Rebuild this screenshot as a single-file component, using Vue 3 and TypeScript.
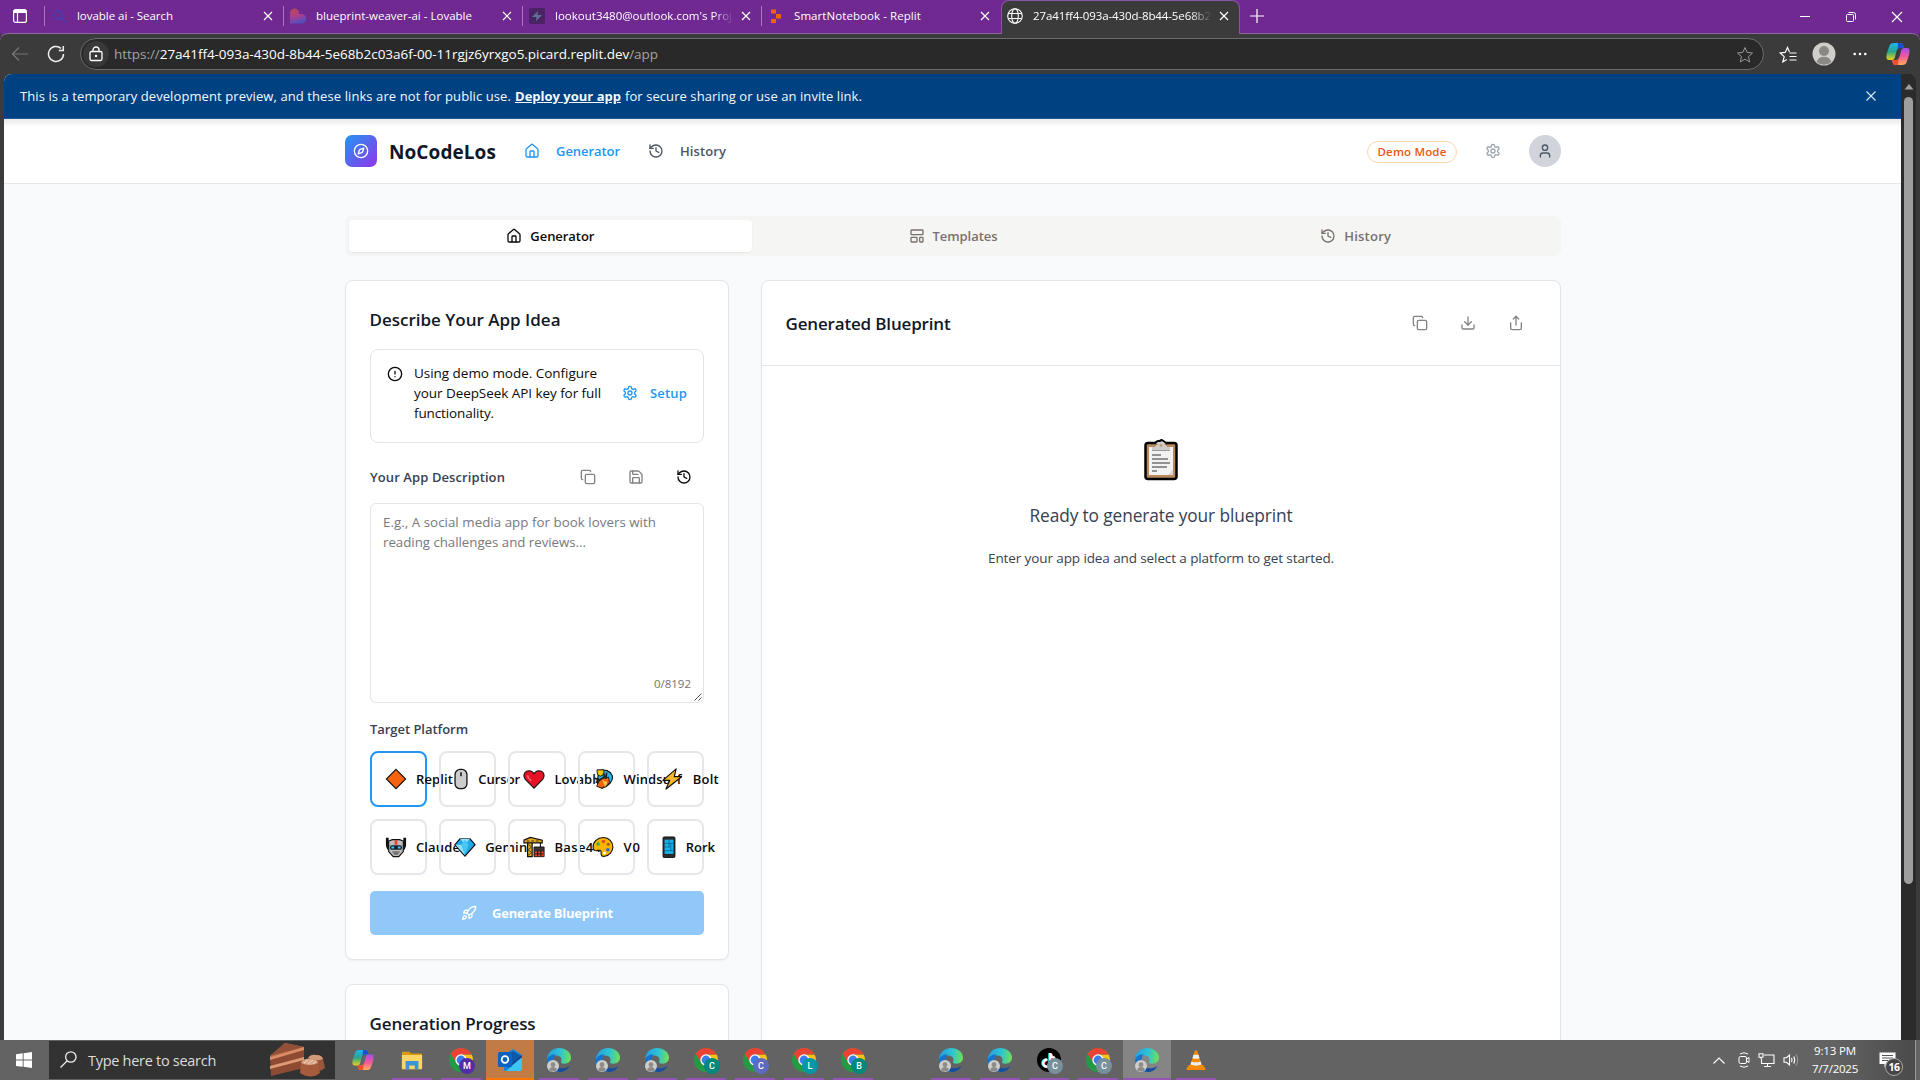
<script setup lang="ts">
import type { Directive } from 'vue'

// Spaces the letters so that a label takes exactly the given width.
const vFit: Directive<HTMLElement, number> = {
  mounted(el, { value }) {
    const count = (el.textContent ?? '').length
    const natural = el.getBoundingClientRect().width
    if (count && natural) el.style.letterSpacing = `${(value - natural) / count}px`
  },
}

const line: Record<string, string> = {
  home: '<path d="M15 21v-8a1 1 0 0 0-1-1h-4a1 1 0 0 0-1 1v8"/><path d="M3 10a2 2 0 0 1 .7-1.5l7-6a2 2 0 0 1 2.6 0l7 6A2 2 0 0 1 21 10v9a2 2 0 0 1-2 2H5a2 2 0 0 1-2-2z"/>',
  history: '<path d="M3 12a9 9 0 1 0 9-9 9.75 9.75 0 0 0-6.74 2.74L3 8"/><path d="M3 3v5h5"/><path d="M12 7v5l4 2"/>',
  layout: '<rect width="18" height="7" x="3" y="3" rx="1"/><rect width="9" height="7" x="3" y="14" rx="1"/><rect width="5" height="7" x="16" y="14" rx="1"/>',
  gear: '<path d="M12.22 2h-.44a2 2 0 0 0-2 2v.18a2 2 0 0 1-1 1.73l-.43.25a2 2 0 0 1-2 0l-.15-.08a2 2 0 0 0-2.73.73l-.22.38a2 2 0 0 0 .73 2.73l.15.1a2 2 0 0 1 1 1.72v.51a2 2 0 0 1-1 1.74l-.15.09a2 2 0 0 0-.73 2.73l.22.38a2 2 0 0 0 2.73.73l.15-.08a2 2 0 0 1 2 0l.43.25a2 2 0 0 1 1 1.73V20a2 2 0 0 0 2 2h.44a2 2 0 0 0 2-2v-.18a2 2 0 0 1 1-1.73l.43-.25a2 2 0 0 1 2 0l.15.08a2 2 0 0 0 2.73-.73l.22-.39a2 2 0 0 0-.73-2.73l-.15-.08a2 2 0 0 1-1-1.74v-.5a2 2 0 0 1 1-1.74l.15-.09a2 2 0 0 0 .73-2.73l-.22-.38a2 2 0 0 0-2.73-.73l-.15.08a2 2 0 0 1-2 0l-.43-.25a2 2 0 0 1-1-1.73V4a2 2 0 0 0-2-2z"/><circle cx="12" cy="12" r="3"/>',
  user: '<path d="M19 21v-2a4 4 0 0 0-4-4H9a4 4 0 0 0-4 4v2"/><circle cx="12" cy="7" r="4"/>',
  compass: '<circle cx="12" cy="12" r="10"/><path d="m16.24 7.76-1.8 5.41a2 2 0 0 1-1.27 1.27L7.76 16.24l1.8-5.41a2 2 0 0 1 1.27-1.27z"/>',
  copy: '<rect width="14" height="14" x="8" y="8" rx="2"/><path d="M4 16c-1.1 0-2-.9-2-2V4c0-1.1.9-2 2-2h10c1.1 0 2 .9 2 2"/>',
  save: '<path d="M15.2 3a2 2 0 0 1 1.4.6l3.8 3.8a2 2 0 0 1 .6 1.4V19a2 2 0 0 1-2 2H5a2 2 0 0 1-2-2V5a2 2 0 0 1 2-2z"/><path d="M17 21v-7a1 1 0 0 0-1-1H8a1 1 0 0 0-1 1v7"/><path d="M7 3v4a1 1 0 0 0 1 1h7"/>',
  download: '<path d="M21 15v4a2 2 0 0 1-2 2H5a2 2 0 0 1-2-2v-4"/><path d="m7 10 5 5 5-5"/><path d="M12 15V3"/>',
  share: '<path d="M4 12v8a2 2 0 0 0 2 2h12a2 2 0 0 0 2-2v-8"/><path d="m16 6-4-4-4 4"/><path d="M12 2v13"/>',
  alert: '<circle cx="12" cy="12" r="10"/><path d="M12 8v4M12 16h.01"/>',
  rocket: '<path d="M4.5 16.5c-1.5 1.26-2 5-2 5s3.74-.5 5-2c.71-.84.7-2.13-.09-2.91a2.18 2.18 0 0 0-2.91-.09z"/><path d="m12 15-3-3a22 22 0 0 1 2-3.95A12.88 12.88 0 0 1 22 2c0 2.72-.78 7.5-6 11a22.35 22.35 0 0 1-4 2z"/><path d="M9 12H4s.55-3.03 2-4c1.62-1.08 5 0 5 0"/><path d="M12 15v5s3.03-.55 4-2c1.08-1.62 0-5 0-5"/>',
}

// Colour glyphs, drawn in a 24-unit box.
const art: Record<string, string> = {
  diamond: '<path d="M12 1.500 22.500 12 12 22.500 1.500 12z" fill="#f7630c" stroke="#111" stroke-width="1.2"/>',
  mouse: '<rect x="5.5" y="1.6" width="13" height="21" rx="5.5" fill="#ccc" stroke="#111" stroke-width="1.4"/><path d="M12 4.5v4.6" stroke="#111" stroke-width="1.6"/>',
  heart: '<path d="M12 22 2.500 12.300C.1 9.500.5 5.300 4 3.600 7 2.200 10.400 3.400 12 6.300 13.600 3.400 17 2.200 20 3.600c3.500 1.700 3.900 5.900 1.500 8.700z" fill="#e81224" stroke="#111" stroke-width="1.2"/><path d="M5 8c0 2 1.500 4 4 6" stroke="#f4656f" stroke-width="1.800" fill="none"/>',
  surf: '<path d="M7 3c7-2 13 0 15 5 2 6-4 12-11 14-3-1-5-3-5-6z" fill="#2bb3e6" stroke="#111" stroke-width="1.200"/><path d="m5 20 4-8 9-2 1 6-8 6z" fill="#f7630c" stroke="#111" stroke-width=".9"/><path d="m11 12 6 5-3 4z" fill="#f7b23c"/><path d="M5.500 3.500V2H13v5l-4 2-3-2z" fill="#f2c80f" stroke="#111" stroke-width="1"/><path d="M2 11l7 2 5-4-2-3M9 13l-5 3M16 5l-1 7" stroke="#222" stroke-width="1.800" fill="none"/><circle cx="15" cy="16" r="1.200" fill="#fbd44b"/>',
  bolt: '<path d="M16.500 1 2 13.500h7.500L5.500 23 22.500 9.500h-8z" fill="#fcb827" stroke="#111" stroke-width="1.300" stroke-linejoin="round"/>',
  robot: '<path d="M2.500 2v8.500l1.500 4M21.500 2v8.500l-1.500 4" stroke="#111" stroke-width="3" fill="none"/><path d="M4 5.500 8 4h8l4 1.500v11.500L15 22.500H9L4 17z" fill="#bdbdbd" stroke="#111" stroke-width="1.300"/><path d="M10.500 4.500h3v5h-3z" fill="#e8442e"/><rect x="5.500" y="10" width="13" height="5" rx="2" fill="#17202a"/><path d="M7 12.500h3M14 12.500h3" stroke="#42c8f5" stroke-width="2"/><path d="M8 17.500h8M9.500 19.500h5" stroke="#444" stroke-width="1.200"/>',
  gem: '<path d="M6.500 3h11L23 9.500 12 22 1 9.500z" fill="#1fa9e8" stroke="#111" stroke-width="1.300"/><path d="M6.500 3 12 9l5.500-6zM1.500 9.500h7L12 21z" fill="#8fe0fb"/><path d="m8 9.500 4-5.500 4 5.500-4 11z" fill="#49c6f2"/>',
  crane: '<path d="M5 5h5v17.500H5z" fill="#e6a91c" stroke="#111" stroke-width="1.300"/><path d="M5.500 9 9.500 12l-4 3 4 3-4 3" stroke="#4c3a10" fill="none"/><path d="M1 4.500 8 1.500l13 3v3H1z" fill="#e6a91c" stroke="#111" stroke-width="1.200"/><path d="M4 5.500h3M9 5.500h3M14 5.500h3" stroke="#4c3a10" stroke-width="1.200"/><path d="M12 12h11v10.500H12z" fill="#3c3434" stroke="#111"/><path d="M13 17h9.500v5H13z" fill="#f0412b"/><path d="M16 15v7M19.500 15v7M13 19.500h9" stroke="#111"/><path d="M19 7v5" stroke="#111" stroke-width="1.200"/>',
  palette: '<path d="M12.500 1.700C6 1.500 1 6.500 1.200 12.200c.1 3.800 2.500 4.300 5.200 3.500 2.600-.7 4 .3 3.500 2.800-.4 2.500.8 4.100 4 3.600 5-.8 8.900-5 8.900-10.100 0-5.800-4.300-10.200-10.300-10.300z" fill="#f7b500" stroke="#111" stroke-width="1.200"/><circle cx="12.500" cy="6" r="1.900" fill="#e8442e"/><circle cx="6.700" cy="8.600" r="1.900" fill="#35b34a"/><circle cx="17.800" cy="9" r="1.700" fill="#a95b19"/><circle cx="17.300" cy="15" r="1.900" fill="#2868d8"/><circle cx="13.500" cy="18.500" r="1.700" fill="#fff"/>',
  phone: '<rect x="5.500" y="1" width="13" height="22.500" rx="1.300" fill="#2a2a2a" stroke="#111" stroke-width="1"/><rect x="7.200" y="4" width="9.600" height="15.500" fill="#16b4ea"/><path d="M7 8h10M7 12h6M7 16h10M12 4v8M14 8v8" stroke="#0b5c86" stroke-width=".8"/>',
}

const chrome =
  '<circle cx="12" cy="12" r="12" fill="#259a45"/><path d="M12 6.500h10.650A12 12 0 0 1 12 24l5-9z" fill="#fbc116"/><path d="M1.600 6A12 12 0 0 1 22.650 6.500H12L7 14z" fill="#ea4335"/><circle cx="12" cy="12" r="5.700" fill="#fff"/><circle cx="12" cy="12" r="4.400" fill="#3b7ded"/>'
const edge =
  '<defs><linearGradient id="eg" x1="0" y1=".3" x2="1" y2=".4"><stop stop-color="#229fe0"/><stop offset=".55" stop-color="#2fc3d3"/><stop offset="1" stop-color="#6fe05a"/></linearGradient></defs><path d="M0 12C0 5 5 0 12 0c7 0 12 4.500 12 9.500 0 4-3 6.200-6.500 6.200-2.500 0-4-1-3.500-2 1-1.500 1-5.500-4-6.200C5 7 1 9 0 12z" fill="url(#eg)"/><path d="M0 12c1-4 5-6 8.500-5.500C5 10 6 20 14 23.800 6 25 0 19 0 12z" fill="#1673cc"/><path d="M8.500 11C6.500 17 12 24 22.500 18c-2.500 4.500-6 6-10 6-4.500-1-8-8-4-13z" fill="#174f9e"/>'
const copilot =
  '<defs><linearGradient id="ca" x1="0" y1="0" x2="0" y2="1"><stop stop-color="#1bb6f5"/><stop offset=".5" stop-color="#2aa58d"/><stop offset="1" stop-color="#ead21c"/></linearGradient><linearGradient id="cb" x1="0" y1="0" x2="0" y2="1"><stop stop-color="#a44cf0"/><stop offset=".5" stop-color="#f0599b"/><stop offset="1" stop-color="#ffae5c"/></linearGradient></defs><path d="M8 1h6c3 0 3 2 4 5h-4c-2 0-3 1-4 5l-1 4c-1 3-2 3-4 3H3c-3 0-3-3-2-7l2-6c1-3 2-4 5-4z" fill="url(#ca)"/><path d="M12 1h2.500C17 1 17.500 3 18.200 6H15c-2 0-2.500 0-3.500 3z" fill="#1b50d2"/><path d="M16 23h-6c-3 0-3-2-4-5h4c2 0 3-1 4-5l1-4c1-3 2-3 4-3h2c3 0 3 3 2 7l-2 6c-1 3-2 4-5 4z" fill="url(#cb)"/><path d="M12 23h-2c-3 0-3.300-2-4-5h3c2 0 3 0 4-3z" fill="#f0502e"/>'
const explorer =
  '<path d="M1 4q0-1 1-1h7l2 2h11q1 0 1 1v14H1z" fill="#d99a10"/><path d="M1 6.500h22v14.500q0 1-1 1H2q-1 0-1-1z" fill="#fbd667"/><path d="M5 13h14v9h-4v-4H9v4H5z" fill="#3a94d8"/>'
const outlook =
  '<path d="M6 7 15 1l9 6v14q0 2-2 2H8q-2 0-2-2z" fill="#1485dc"/><path d="m8 8 7-5 8 5-8 6z" fill="#0f58a8"/><path d="M24 9v12q0 2-2 2H8z" fill="#3cc5f3"/><path d="m24 8-14 11" stroke="#14438f" stroke-width="2"/><rect x="0" y="4" width="14" height="15" rx="1.500" fill="#0a63c2"/><circle cx="7" cy="11.500" r="3.300" fill="none" stroke="#fff" stroke-width="1.800"/>'
const tiktok =
  '<circle cx="12" cy="12" r="12" fill="#000"/><path d="M12.500 5v10a3.500 3.500 0 1 1-3-3.500" stroke="#25f4ee" stroke-width="2.500" fill="none"/><path d="M14 5.500V15.500a3.500 3.500 0 1 1-3-3.500M14 6c.5 2.500 2 4 4.500 4.500" stroke="#fe2c55" stroke-width="2.500" fill="none"/><path d="M13.300 5v10.300a3.500 3.500 0 1 1-3-3.500M13.300 5.500c.5 2.500 2 4 4.500 4.500" stroke="#fff" stroke-width="2.300" fill="none"/>'
const vlc =
  '<path d="M4 17.500h16l2.500 4.500q0 1-1 1h-19q-1 0-1-1z" fill="#f58a07"/><path d="M10.700 2q1.300-1.500 2.600 0l5.200 16.500q-6.500 3-13 0z" fill="#f58a07"/><path d="m9.400 6-1.300 4q3.900 1.500 7.800 0L14.600 6q-2.600 1-5.200 0zM7 13.500l-1 3.500q6 2.500 12 0l-1-3.500q-5 2-10 0z" fill="#eee"/>'

interface TabItem { title: string; width: number; icon: string; active?: boolean; cut?: boolean }
const tabs: TabItem[] = [
  { title: 'lovable ai - Search', width: 96, icon: '<circle cx="6.800" cy="6.800" r="4" fill="none" stroke="#4340b8" stroke-width="1.500"/><path d="m10 10 4.500 4.500" stroke="#4340b8" stroke-width="1.600"/>' },
  { title: 'blueprint-weaver-ai - Lovable', width: 156, icon: '<defs><linearGradient id="lv" x1=".2" y1="0" x2=".5" y2="1"><stop stop-color="#b34a52"/><stop offset=".5" stop-color="#ad3e8c"/><stop offset="1" stop-color="#4e4fc4"/></linearGradient></defs><path d="M0 5a4.500 4.500 0 0 1 9 0v1h2.500a4.500 4.500 0 0 1 0 9.500H0z" fill="url(#lv)"/>' },
  { title: "lookout3480@outlook.com's Proj", width: 177, cut: true, icon: '<rect width="16" height="16" rx="2" fill="#4b2263"/><path d="M9 3 3 9h4.500L7 13l6-6H8.500z" fill="#5c7396"/>' },
  { title: 'SmartNotebook - Replit', width: 127, icon: '<path d="M3 1.500h5v4H3zM8 6h5v4.500H8zM3 11h5v4H3z" fill="#f26207"/>' },
  { title: '27a41ff4-093a-430d-8b44-5e68b2', width: 178, active: true, cut: true, icon: '<g fill="none" stroke="#fff" stroke-width="1.100"><circle cx="8" cy="8" r="7.300"/><ellipse cx="8" cy="8" rx="3.300" ry="7.300"/><path d="M1.300 5.500h13.400M1.300 10.500h13.400"/></g>' },
]

interface Platform { name: string; width: number; icon: string; narrow?: boolean }
const platforms: Platform[] = [
  { name: 'Replit', width: 37, icon: 'diamond' },
  { name: 'Cursor', width: 42, icon: 'mouse', narrow: true },
  { name: 'Lovable', width: 49, icon: 'heart' },
  { name: 'Windsurf', width: 58, icon: 'surf' },
  { name: 'Bolt', width: 26, icon: 'bolt' },
  { name: 'Claude', width: 44, icon: 'robot' },
  { name: 'Gemini', width: 46, icon: 'gem' },
  { name: 'Base44', width: 47, icon: 'crane' },
  { name: 'V0', width: 17, icon: 'palette' },
  { name: 'Rork', width: 29, icon: 'phone', narrow: true },
]

interface Task { svg: string; badge?: string; color?: string; kind?: string }
const person = { svg: edge, badge: 'person' }
const tasks: Task[] = [
  { svg: copilot, kind: 'idle small' },
  { svg: explorer, kind: 'small' },
  { svg: chrome, badge: 'M', color: '#512da8' },
  { svg: outlook, kind: 'orange' },
  person, person, person,
  { svg: chrome, badge: 'C', color: '#00897b' },
  { svg: chrome, badge: 'C', color: '#5c6bc0' },
  { svg: chrome, badge: 'L', color: '#0097a7' },
  { svg: chrome, badge: 'B', color: '#00897b' },
  { svg: '', kind: 'idle' },
  person, person,
  { svg: tiktok, badge: 'C', color: '#78909c' },
  { svg: chrome, badge: 'C', color: '#78909c' },
  { svg: edge, badge: 'person', kind: 'current' },
  { svg: vlc, kind: 'small' },
]
</script>

<template>
  <div class="screen">
    <div class="strip">
      <div class="strip-lead">
        <svg width="14" height="14" viewBox="0 0 14 14" fill="none" stroke="#fff" stroke-width="1.200"><rect x=".6" y=".6" width="12.800" height="12.800" rx="2" /><path d="M1 2.500h12" stroke-width="3" /><path d="M4.500 4v9.500" /></svg>
      </div>
      <div v-for="t in tabs" :key="t.title" class="tab" :class="{ active: t.active }">
        <svg class="fav" width="16" height="16" viewBox="0 0 16 16" v-html="t.icon" />
        <div class="tab-title" :class="{ cut: t.cut }"><span v-fit="t.width" class="t">{{ t.title }}</span></div>
        <svg class="tab-x" width="10" height="10" viewBox="0 0 10 10"><path d="m1 1 8 8M9 1 1 9" stroke="#fff" stroke-width="1.200" /></svg>
      </div>
      <svg class="plus" width="14" height="14" viewBox="0 0 14 14"><path d="M7 0v14M0 7h14" stroke="#fff" stroke-width="1.200" /></svg>
      <div class="win">
        <svg width="46" height="34" viewBox="0 0 46 34" fill="none" stroke="#fff"><path d="M18 16.500h10" /></svg>
        <svg width="46" height="34" viewBox="0 0 46 34" fill="none" stroke="#fff"><rect x="18.500" y="14.500" width="7" height="7" rx="1" /><path d="M20.500 12.500h5q2 0 2 2v5" /></svg>
        <svg width="46" height="34" viewBox="0 0 46 34" fill="none" stroke="#fff" stroke-width="1.200"><path d="m18 12 10 10M28 12 18 22" /></svg>
      </div>
    </div>

    <div class="toolbar">
      <svg class="back" width="18" height="16" viewBox="0 0 18 16" fill="none" stroke="#777" stroke-width="1.200"><path d="M17 8H1.500M8 1.500 1.500 8 8 14.500" /></svg>
      <svg class="reload" width="18" height="18" viewBox="0 0 18 18" fill="none" stroke="#eee" stroke-width="1.500"><path d="M16.500 9a7.500 7.500 0 1 1-2.500-5.600M16.300 1v4.500h-4.500" /></svg>
      <div class="url">
        <div class="lock">
          <svg width="14" height="16" viewBox="0 0 14 16" fill="none" stroke="#fff" stroke-width="1.300"><rect x="1" y="5.500" width="12" height="9" rx="1.500" /><path d="M4 5.500V4a3 3 0 0 1 6 0v1.500" /><circle cx="7" cy="10" r=".6" fill="#fff" /></svg>
        </div>
        <span v-fit="544" class="t url-text"><i>https://</i>27a41ff4-093a-430d-8b44-5e68b2c03a6f-00-11rgjz6yrxgo5.picard.replit.dev<i>/app</i></span>
        <svg class="star" width="18" height="17" viewBox="0 0 18 17" fill="none" stroke="#999"><path d="m9 1.500 2.200 4.900 5.300.6-4 3.600 1.200 5.300L9 13.200l-4.700 2.700 1.200-5.300-4-3.600 5.300-.6z" /></svg>
      </div>
      <svg class="favs" width="18" height="17" viewBox="0 0 18 17" fill="none" stroke="#fff" stroke-width="1.200"><path d="M10.500 6 8.500 1.500 6.200 6.400l-5 .6 4 3.600-1.400 5.300 4-2.400M10.500 7h7M10.500 10.500h7M10.500 14h7" /></svg>
      <svg class="me" width="24" height="24" viewBox="0 0 24 24"><circle cx="12" cy="12" r="11.500" fill="#d0cecb" /><circle cx="12" cy="9" r="5" fill="#8b8885" /><path d="M4.500 20a8 8 0 0 1 15 0A11.500 11.500 0 0 1 4.500 20z" fill="#8b8885" /></svg>
      <svg class="dots" width="14" height="4" viewBox="0 0 14 4" fill="#fff"><circle cx="1.700" cy="2" r="1.300" /><circle cx="7" cy="2" r="1.300" /><circle cx="12.300" cy="2" r="1.300" /></svg>
      <svg width="24" height="24" viewBox="0 0 24 24" v-html="copilot" />
    </div>

    <div class="view">
      <div class="page">
        <div class="banner">
          <span v-fit="491" class="t">This is a temporary development preview, and these links are not for public use.</span>
          <b v-fit="106" class="t deploy">Deploy your app</b>
          <span v-fit="237" class="t">for secure sharing or use an invite link.</span>
          <svg class="banner-x" width="10" height="10" viewBox="0 0 10 10"><path d="m.5.500 9 9M9.500.500l-9 9" stroke="#dbe5f0" stroke-width="1.200" /></svg>
        </div>

        <header class="head">
          <div class="wrap head-in">
            <div class="logo"><svg class="ln" width="16" height="16" viewBox="0 0 24 24" v-html="line.compass" /></div>
            <b class="brand"><span v-fit="107" class="t">NoCodeLos</span></b>
            <svg class="ln blue nav-home" width="16" height="16" viewBox="0 0 24 24" v-html="line.home" />
            <span v-fit="64" class="t m nav-gen">Generator</span>
            <svg class="ln nav-hist" width="16" height="16" viewBox="0 0 24 24" v-html="line.history" />
            <span v-fit="46" class="t m nav-label">History</span>
            <div class="pill"><span v-fit="69" class="t">Demo Mode</span></div>
            <svg class="ln head-gear" width="16" height="16" viewBox="0 0 24 24" v-html="line.gear" />
            <div class="avatar"><svg class="ln" width="16" height="16" viewBox="0 0 24 24" v-html="line.user" /></div>
          </div>
        </header>

        <main class="wrap main">
          <div class="segs">
            <div class="seg on"><svg class="ln" width="16" height="16" viewBox="0 0 24 24" v-html="line.home" /><span v-fit="64" class="t m">Generator</span></div>
            <div class="seg"><svg class="ln" width="16" height="16" viewBox="0 0 24 24" v-html="line.layout" /><span v-fit="65" class="t m">Templates</span></div>
            <div class="seg"><svg class="ln" width="16" height="16" viewBox="0 0 24 24" v-html="line.history" /><span v-fit="47" class="t m">History</span></div>
          </div>

          <div class="cols">
            <div class="left">
              <section class="card form">
                <h2><span v-fit="191" class="t">Describe Your App Idea</span></h2>
                <div class="notice">
                  <svg class="ln notice-i" width="16" height="16" viewBox="0 0 24 24" v-html="line.alert" />
                  <div class="notice-text">
                    <div><span v-fit="183" class="t">Using demo mode. Configure</span></div>
                    <div><span v-fit="187" class="t">your DeepSeek API key for full</span></div>
                    <div><span v-fit="80" class="t">functionality.</span></div>
                  </div>
                  <div class="setup"><svg class="ln" width="16" height="16" viewBox="0 0 24 24" v-html="line.gear" /><span v-fit="37" class="t m">Setup</span></div>
                </div>
                <div class="desc-row">
                  <span v-fit="135" class="t m label">Your App Description</span>
                  <div class="tools">
                    <svg class="ln dim" width="16" height="16" viewBox="0 0 24 24" v-html="line.copy" />
                    <svg class="ln dim" width="16" height="16" viewBox="0 0 24 24" v-html="line.save" />
                    <svg class="ln" width="16" height="16" viewBox="0 0 24 24" v-html="line.history" />
                  </div>
                </div>
                <div class="area">
                  <div><span v-fit="273" class="t">E.g., A social media app for book lovers with</span></div>
                  <div><span v-fit="203" class="t">reading challenges and reviews...</span></div>
                  <div class="count"><span v-fit="37" class="t">0/8192</span></div>
                  <svg class="grip" width="8" height="8" viewBox="0 0 8 8" stroke="#555"><path d="M.5 7.500l7-7M4.500 7.500l3-3" /></svg>
                </div>
                <div class="label target"><span v-fit="98" class="t m">Target Platform</span></div>
                <div class="grid">
                  <div v-for="(p, i) in platforms" :key="p.name" class="opt" :class="{ picked: i === 0 }">
                    <svg :class="{ narrow: p.narrow }" width="22" height="22" viewBox="0 0 24 24" v-html="art[p.icon]" />
                    <span v-fit="p.width" class="t m">{{ p.name }}</span>
                  </div>
                </div>
                <div class="generate"><svg class="ln" width="16" height="16" viewBox="0 0 24 24" v-html="line.rocket" /><span v-fit="121" class="t">Generate Blueprint</span></div>
              </section>
              <section class="card progress"><h2><span v-fit="166" class="t">Generation Progress</span></h2></section>
            </div>

            <section class="card right">
              <div class="right-head">
                <h2><span v-fit="165" class="t">Generated Blueprint</span></h2>
                <div class="tools">
                  <svg class="ln dim" width="16" height="16" viewBox="0 0 24 24" v-html="line.copy" />
                  <svg class="ln dim" width="16" height="16" viewBox="0 0 24 24" v-html="line.download" />
                  <svg class="ln dim" width="16" height="16" viewBox="0 0 24 24" v-html="line.share" />
                </div>
              </div>
              <div class="empty">
                <svg width="34" height="42" viewBox="0 0 34 42">
                  <rect x="1.500" y="4" width="31" height="36" rx="2.500" fill="#b98a5e" stroke="#000" stroke-width="2.500" />
                  <path d="M11 5q1-3 3.500-3T17 1.200 19.500 2 23 5" fill="#d5d5d5" stroke="#000" stroke-width="2" />
                  <path d="M5 8h24v23l-4 5H5z" fill="#f2f2f2" /><path d="M29 31v5h-4z" fill="#d9d9d9" />
                  <path d="M8 8h3q1-3 4-3l2-2 2 2q3 0 4 3h3v3.500H8z" fill="#ccc" /><circle cx="17" cy="6.500" r="1.400" fill="#c39a6d" />
                  <path d="M8 11.500h18" stroke="#999" /><path d="M8 16h9M8 20h16M8 24h18M8 28h15M8 32h5" stroke="#333" stroke-width="1.200" />
                </svg>
                <div class="ready"><span v-fit="263" class="t">Ready to generate your blueprint</span></div>
                <div class="hint"><span v-fit="346" class="t">Enter your app idea and select a platform to get started.</span></div>
              </div>
            </section>
          </div>
        </main>
      </div>
      <div class="scroll">
        <svg width="10" height="6" viewBox="0 0 10 6"><path d="M5 0 9.500 5.500h-9z" fill="#a0a0a0" /></svg>
        <div class="thumb"></div>
      </div>
    </div>

    <div class="taskbar">
      <div class="start">
        <svg width="16" height="16" viewBox="0 0 16 16" fill="#fff"><path d="M0 2.200 6.700 1.300v6.300H0zM7.600 1.200 16 0v7.600H7.600zM0 8.500h6.700v6.300L0 13.900zM7.600 8.500H16V16l-8.400-1.200z" /></svg>
      </div>
      <div class="search">
        <svg width="17" height="18" viewBox="0 0 17 18" fill="none" stroke="#eee" stroke-width="1.300"><circle cx="10.800" cy="6" r="5.200" /><path d="m7 10-6.500 6.500" /></svg>
        <span v-fit="128" class="t search-text">Type here to search</span>
        <svg class="cake" width="56" height="36" viewBox="0 0 56 36">
          <path d="M0 14 15 1l19 4v5L0 18z" fill="#bb7350" /><path d="M15 1 34 5 0 14z" fill="#945037" />
          <path d="M0 15 34 5v21L1 34z" fill="#8d4b34" /><path d="M0 15 34 5v3L0 18z" fill="#d98b64" /><path d="M0 24 34 15v3L0 27z" fill="#dd9a74" />
          <path d="M38 16q3-4 8-3 6 0 7 4l2 9q-5 5-12 2z" fill="#9a5739" /><path d="M38 16q3-4 8-3 6 0 7 4-7 3-15-1z" fill="#d19a7a" />
          <path d="M31 21q3-5 10-4 6 0 7 4l2 10q-9 7-20 0z" fill="#a65c3b" /><path d="M31 21q3-5 10-4 6 0 7 4-8 4-17 0z" fill="#d8a587" /><path d="m34 21 4-3M38 22l5-4M43 22l3-3" stroke="#f2d5c2" />
        </svg>
      </div>
      <div class="tasks">
        <div v-for="(k, i) in tasks" :key="i" class="task" :class="k.kind">
          <svg class="ico" viewBox="0 0 24 24" v-html="k.svg" />
          <svg v-if="k.badge === 'person'" class="who" width="12" height="12" viewBox="0 0 12 12"><circle cx="6" cy="6" r="6" fill="#cfcdca" /><circle cx="6" cy="4.700" r="2.400" fill="#8d8b88" /><path d="M2 10a4.200 4.200 0 0 1 8 0 6 6 0 0 1-8 0z" fill="#8d8b88" /></svg>
          <span v-else-if="k.badge" class="badge" :style="{ background: k.color }">{{ k.badge }}</span>
        </div>
      </div>
      <div class="tray">
        <svg class="chev" width="12" height="7" viewBox="0 0 12 7" fill="none" stroke="#fff" stroke-width="1.200"><path d="m.5 6.500 5.500-5.500 5.500 5.500" /></svg>
        <svg width="12" height="16" viewBox="0 0 12 16" fill="none" stroke="#fff"><rect x="1" y="4.500" width="7.500" height="7" rx="1.500" /><path d="m8.500 7 2.500-1.500v5L8.500 9M2 2q4-2.500 8 0M2 14q4 2.500 8 0" /></svg>
        <svg width="17" height="15" viewBox="0 0 17 15" fill="none" stroke="#fff" stroke-width="1.100"><path d="M6 2h10v8.500H3.500V6M9.500 10.500V13M6 13.500h7M1 .8h4v3.500H1zM3 4.300V6" /></svg>
        <svg width="17" height="14" viewBox="0 0 17 14" fill="none" stroke="#fff" stroke-width="1.100"><path d="M1 4.700h2.500L6.500 2v10l-3-2.700H1zM8.500 5q1 2 0 4M10.700 3.500q2 3.500 0 7" /><path d="M13 1.500q3.500 5.500 0 11" stroke="#999" /></svg>
        <div class="clock"><div><span v-fit="42" class="t">9:13 PM</span></div><div><span v-fit="46" class="t">7/7/2025</span></div></div>
        <div class="bell">
          <svg width="17" height="17" viewBox="0 0 17 17"><path d="M.5.500h16v11.500H9L5.500 15.500V12h-5z" fill="#fff" /><path d="M3 3.500h11M3 6h11M3 8.500h8" stroke="#555" /></svg>
          <span class="num">16</span>
        </div>
      </div>
    </div>
  </div>
</template>

<style>
body { overflow: hidden; background: #3b3b3b; }
</style>

<style scoped>
* { box-sizing: border-box; }
.screen { width: 1920px; height: 1080px; display: flex; flex-direction: column; overflow: hidden; background: #3b3b3b; font-family: "Open Sans", "Noto Sans", sans-serif; font-size: 13.5px; line-height: 20px; color: #0c0a09; }
svg { display: block; flex: none; }
.t { display: inline-block; white-space: nowrap; flex: none; }
.m { font-weight: 600; font-size: 13px; }
.ln { fill: none; stroke: currentColor; stroke-width: 2; stroke-linecap: round; stroke-linejoin: round; }
.blue { color: #2196f3; }
.dim { opacity: .5; }
h2 { margin: 0; font-size: 17px; font-weight: 600; line-height: 28px; color: #111827; white-space: nowrap; }

.strip { display: flex; height: 33px; flex: none; background: #6f2990; color: #fff; font-size: 11.5px; }
.strip-lead { width: 45px; padding: 9px 0 0 13px; }
.tab { width: 239px; height: 32px; display: flex; align-items: center; padding-left: 6px; position: relative; }
.tab:not(.active)::before { content: ""; width: 1px; height: 20px; background: #a777bd; margin-left: -7px; margin-right: 6px; }
.tab.active { height: 34px; background: #3b3b3b; border: 1px solid #8b55a6; border-bottom: 0; border-radius: 8px 8px 0 0; z-index: 1; padding: 0 0 3px 5px; }
.tab-title { margin-left: 10px; width: 180px; height: 20px; white-space: nowrap; }
.tab-title.cut { mask-image: linear-gradient(90deg, #000 158px, transparent 179px); }
.tab-x { margin-left: 6px; }
.plus { margin: 9px 0 0 10px; }
.win { margin-left: auto; display: flex; }

.toolbar { height: 41px; flex: none; display: flex; align-items: center; background: #3b3b3b; border-top: 1px solid #8b6a9b; border-radius: 8px 8px 0 0; box-shadow: 0 -8px 0 -1px #6f2990; }
.back { margin-left: 11px; }
.reload { margin-left: 18px; }
.url { margin-left: 15px; width: 1684px; height: 32px; background: #292929; border: 1px solid #6c6c6c; border-radius: 16px; display: flex; align-items: center; flex: none; }
.lock { width: 26px; height: 26px; border-radius: 50%; background: #383838; display: flex; align-items: center; justify-content: center; margin-left: 2px; }
.url-text { margin-left: 5px; color: #fff; font-size: 13.5px; }
.url-text i { font-style: normal; color: #a3a3a3; }
.star { margin-left: auto; margin-right: 9px; }
.favs { margin-left: 15px; }
.me { margin-left: 15px; }
.dots { margin: 0 19px 0 17px; }

.view { flex: 1; min-height: 0; display: flex; padding-left: 4px; }
.page { width: 1897px; height: 966px; overflow: hidden; background: #f9fafc; border-radius: 8px 0 0 0; }
.banner { height: 45px; background: #004182; border-bottom: 1px solid #1c5796; color: #f5f9fc; display: flex; align-items: center; padding: 0 25px 0 16px; font-size: 13px; }
.deploy { margin: 0 4px 0 4px; text-decoration: underline; font-weight: 700; }
.banner-x { margin-left: auto; }
.head { height: 65px; background: linear-gradient(#e9e9e9, #fff 8px); border-bottom: 1px solid #e5e7eb; }
.wrap { width: 1216px; margin-left: 341px; }
.head-in { height: 64px; display: flex; align-items: center; }
.logo { width: 32px; height: 32px; border-radius: 7px; background: linear-gradient(135deg, #2196f3, #9333ea); color: #fff; display: flex; align-items: center; justify-content: center; }
.brand { margin-left: 12px; width: 107px; font-size: 19px; color: #111827; font-weight: 700; padding-top: 2px; }
.nav-home { margin-left: 28px; }
.nav-gen { margin-left: 16px; color: #2196f3; }
.nav-hist { margin-left: 28px; color: #4b5563; }
.nav-label { margin-left: 16px; color: #4b5563; }
.pill { margin-left: auto; width: 90px; height: 22px; border: 1px solid #fed7aa; border-radius: 11px; color: #ea580c; font-size: 11.500px; font-weight: 600; display: flex; align-items: center; justify-content: center; margin-top: 2px; }
.head-gear { margin: 0 28px 0 28px; color: #9ca3af; }
.avatar { width: 32px; height: 32px; border-radius: 50%; background: #d1d5db; color: #4b5563; display: flex; align-items: center; justify-content: center; }

.main { padding-top: 32px; }
.segs { height: 40px; padding: 4px; background: #f5f5f4; border-radius: 6px; display: flex; }
.seg { flex: 1; display: flex; align-items: center; justify-content: center; gap: 8px; color: #78716c; }
.seg.on { background: #fff; color: #0c0a09; border-radius: 4px; box-shadow: 0 1px 2px #0001; }
.cols { display: flex; gap: 32px; margin-top: 24px; }
.left { width: 384px; flex: none; }
.card { background: #fff; border: 1px solid #e5e5e5; border-radius: 8px; box-shadow: 0 1px 2px #0000000d; }
.form { height: 680px; padding: 25px 24px 0; }
.form h2, .progress h2 { margin-left: -.5px; }
.notice { height: 94px; margin-top: 15px; border: 1px solid #e5e5e5; border-radius: 8px; display: flex; padding: 13px 0 0 16px; }
.notice-i { margin-top: 3px; }
.notice-text { width: 189px; margin-left: 11px; }
.setup { display: flex; align-items: center; gap: 12px; height: 20px; margin: 20px 0 0 19px; color: #2196f3; }
.desc-row { display: flex; height: 32px; align-items: center; margin-top: 18px; }
.label { color: #374151; }
.tools { margin-left: auto; display: flex; gap: 32px; padding-right: 12px; }
.area { height: 200px; margin-top: 10px; border: 1px solid #e5e5e5; border-radius: 6px; padding: 8px 12px; color: #78787d; font-size: 13.300px; position: relative; }
.count { position: absolute; right: 12px; bottom: 8px; font-size: 11.500px; color: #78716c; }
.grip { position: absolute; right: 1px; bottom: 1px; }
.target { margin-top: 16px; height: 20px; }
.grid { margin-top: 12px; display: grid; grid-template-columns: repeat(5, minmax(0, 1fr)); grid-auto-rows: 56px; gap: 12px; }
.opt { border: 2px solid #e5e7eb; border-radius: 8px; display: flex; align-items: center; padding-left: 12.500px; position: relative; color: #0c0a09; }
.opt.picked { border-color: #2196f3; }
.opt svg { margin-right: 9.500px; }
.opt svg.narrow { margin: 0 6px 0 -3.500px; }
.generate { margin-top: 16px; height: 44px; background: #90c8f9; border-radius: 5px; display: flex; align-items: center; justify-content: center; gap: 15px; color: #fff; font-weight: 700; font-size: 13px; }
.progress { margin-top: 24px; height: 200px; padding: 25px 24px; }
.right { width: 800px; height: 900px; }
.right-head { height: 85px; border-bottom: 1px solid #e5e5e5; display: flex; align-items: center; padding: 0 24px 0 23.500px; }
.right-head h2 { padding-top: 1px; }
.empty { display: flex; flex-direction: column; align-items: center; padding-top: 73px; color: #374151; }
.ready { margin-top: 21px; font-size: 17.300px; line-height: 28px; }
.hint { margin-top: 18px; }

.scroll { width: 15px; background: #2b2b2b; border-radius: 0 8px 0 0; display: flex; flex-direction: column; align-items: center; padding-top: 10px; }
.thumb { width: 9px; height: 787px; margin-top: 7px; background: #9e9e9e; border-radius: 5px; }

.taskbar { height: 40px; flex: none; background: #636363; display: flex; color: #fff; }
.start { width: 49px; padding: 12px 0 0 16px; }
.search { width: 286px; height: 38px; margin-top: 1px; background: #323232; display: flex; align-items: center; padding-left: 11px; }
.search-text { margin-left: 11px; padding-top: 2px; font-size: 14.500px; color: #ddd; }
.cake { margin-left: 54px; }
.tasks { display: flex; gap: 1px; margin-left: 4px; }
.task { width: 48px; height: 40px; position: relative; display: flex; align-items: center; justify-content: center; }
.ico { width: 24px; height: 24px; }
.small .ico { width: 22px; height: 22px; }
.task::after { content: ""; position: absolute; left: 4px; right: 4px; bottom: 0; height: 2px; background: #9653b8; }
.task.idle::after { display: none; }
.task.orange { background: #c17b46; }
.task.orange::after { left: 0; right: 0; background: #ff7500; }
.task.current { background: #858585; }
.task.current::after { left: 0; right: 0; }
.who { position: absolute; left: 12px; top: 20px; }
.badge { position: absolute; left: 22px; top: 18px; width: 16px; height: 16px; border-radius: 50%; font: 500 9px/16px Roboto, sans-serif; text-align: center; }
.tray { margin-left: auto; display: flex; align-items: center; gap: 8px; border-right: 1px solid #999; margin-right: 4px; background: linear-gradient(90deg, transparent 60%, #4a4a4a); }
.chev { margin-right: 5px; }
.clock { font-size: 11.500px; line-height: 18px; text-align: center; width: 46px; margin: 0 13px 0 4px; white-space: nowrap; }
.bell { width: 36px; position: relative; height: 40px; padding: 12px 0 0 0; }
.num { position: absolute; left: 6px; top: 18px; width: 18px; height: 18px; border-radius: 50%; border: 1px solid #aaa; background: #454545; font-size: 10.500px; font-weight: 700; line-height: 16px; text-align: center; letter-spacing: -.5px; }
</style>
